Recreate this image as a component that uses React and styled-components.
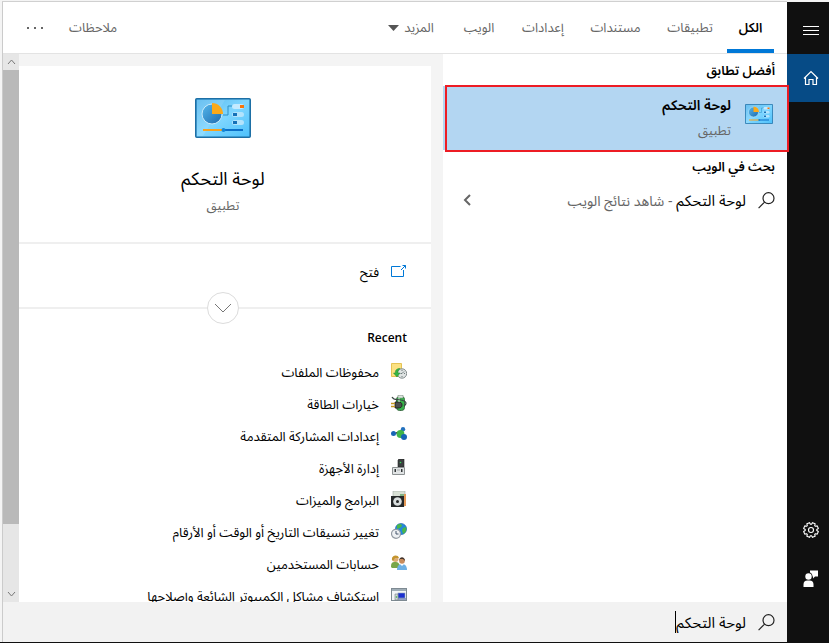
import React from "react";
import styled, { createGlobalStyle } from "styled-components";

const Global = createGlobalStyle`
  *, *::before, *::after { box-sizing: border-box; }
  html, body { margin: 0; padding: 0; }
  body {
    font-family: "Segoe UI", "Noto Sans Arabic", "DejaVu Sans", sans-serif;
    font-size: 13px;
    line-height: 20px;
    color: #000;
    background: #f4f4f4;
  }
  button, input { font: inherit; color: inherit; }
  button { border: 0; background: none; padding: 0; cursor: pointer; }
  h1, h2, p, ul { margin: 0; padding: 0; }
  ul { list-style: none; }
  svg { display: block; flex: none; }
`;

const Screen = styled.div`
  display: flex;
  height: 100vh;
  overflow: hidden;
  padding-top: 2px;
  padding-left: 2px;
  border-bottom: 1px solid #101010;
  background: #f4f4f4;
`;

const Rail = styled.nav`
  display: flex;
  flex-direction: column;
  flex: none;
  width: 42px;
  padding-bottom: 40px;
  background: #101010;
  color: #fff;
`;

const RailButton = styled.button`
  display: flex;
  align-items: center;
  justify-content: center;
  padding-left: 6px;
  padding-top: ${(p) => (p.$tall ? 4 : 0)}px;
  height: ${(p) => (p.$tall ? 52 : 48)}px;
  margin-top: ${(p) => (p.$push ? "auto" : 0)};
  background: ${(p) => (p.$active ? "#064b86" : "transparent")};
`;

const Main = styled.main`
  position: relative;
  z-index: 1;
  display: flex;
  flex-direction: column;
  flex: 1;
  min-width: 0;
  border-left: 1px solid #cbcbcb;
  box-shadow: 0 -1px 0 #d0d0d0;
  background: #fff;
`;

const Header = styled.header`
  display: flex;
  flex: none;
  height: 52px;
  padding: 0 13px 0 16px;
  border-bottom: 1px solid #e3e3e3;
`;

const Tab = styled.button`
  display: flex;
  align-items: center;
  justify-content: center;
  gap: 5px;
  width: ${(p) => p.$width}px;
  padding-top: 4px;
  border-bottom: 4px solid ${(p) => (p.$active ? "#0078d7" : "transparent")};
  font-weight: ${(p) => (p.$active ? 600 : 400)};
  color: ${(p) => (p.$active ? "#000" : "#666")};
  white-space: nowrap;
`;

const HeaderEnd = styled.div`
  display: flex;
  align-items: center;
  gap: 18px;
  margin-inline-start: auto;
  color: #666;
`;

const IconButton = styled.button`
  display: flex;
  align-items: center;
  justify-content: center;
  width: 32px;
  height: 32px;
  color: #666;
`;

const Body = styled.div`
  display: flex;
  flex: 1;
  min-height: 0;
`;

const Results = styled.section`
  flex: 344;
  min-width: 0;
`;

const GroupTitle = styled.h2`
  display: flex;
  align-items: center;
  height: 32px;
  padding: 2px 12px 0;
  font-size: 13px;
  font-weight: 600;
`;

const BestMatch = styled.button`
  position: relative;
  display: flex;
  align-items: flex-start;
  gap: 14px;
  width: 100%;
  height: 64px;
  padding: 10px 14px 0;
  background: #b3d6f2;
  text-align: start;
  & > svg { margin-top: 8px; }
  &::after {
    content: "";
    position: absolute;
    inset: -1px -2px -2px 2px;
    border: 2px solid #ed1c24;
  }
`;

const MatchText = styled.span`
  display: flex;
  flex-direction: column;
  gap: 5px;
`;

const MatchName = styled.strong`
  font-size: 14px;
  font-weight: 600;
`;

const Muted = styled.span`
  font-size: ${(p) => (p.$large ? 14 : 13)}px;
  color: #666;
`;

const WebResult = styled.button`
  display: flex;
  align-items: center;
  gap: 12px;
  width: 100%;
  height: 36px;
  padding: 0 12px 0 20px;
`;

const WebText = styled.span`
  flex: 1;
  padding-top: 2px;
  font-size: 15px;
  text-align: start;
  white-space: nowrap;
`;

const Detail = styled.section`
  display: flex;
  flex: 440;
  min-width: 0;
  background: #f4f4f4;
`;

const Card = styled.div`
  flex: 1;
  min-width: 0;
  margin: 12px 12px 0 0;
  overflow: hidden;
  background: #fff;
`;

const Hero = styled.div`
  display: flex;
  flex-direction: column;
  align-items: center;
  height: 178px;
  padding: 32px 4px 0 0;
  border-bottom: 2px solid #efefef;
`;

const HeroTitle = styled.h1`
  margin: 26px 0 2px;
  font-size: 18px;
  font-weight: 400;
  line-height: 30px;
`;

const Actions = styled.div`
  position: relative;
  height: 65px;
  padding: 12px 24px;
  border-bottom: 2px solid #efefef;
`;

const Row = styled.button`
  display: flex;
  align-items: center;
  gap: 12px;
  width: 100%;
  height: 32px;
  padding-top: 2px;
  text-align: start;
  white-space: nowrap;
  & > svg { margin-bottom: 4px; }
`;

const Expander = styled.button`
  position: absolute;
  bottom: -17px;
  left: calc(50% - 18px);
  display: flex;
  align-items: center;
  justify-content: center;
  width: 32px;
  height: 32px;
  border: 1px solid #dcdcdc;
  border-radius: 50%;
  background: #fff;
`;

const Recent = styled.div`
  padding: 18px 24px 0;
`;

const RecentTitle = styled.h2`
  margin-bottom: 7px;
  font-family: "Open Sans", "Noto Sans", sans-serif;
  font-size: 12px;
  font-weight: 600;
  line-height: 22px;
`;

const ScrollTrack = styled.div`
  display: flex;
  flex-direction: column;
  flex: none;
  width: 16px;
  background: #e6e6e6;
`;

const ScrollArrow = styled.button`
  display: flex;
  align-items: center;
  justify-content: center;
  flex: none;
  height: 16px;
`;

const ScrollLane = styled.div`
  flex: 1;
`;

const ScrollThumb = styled.div`
  height: 88%;
  background: #b9b9b9;
`;

const SearchBar = styled.label`
  display: flex;
  align-items: center;
  gap: 12px;
  flex: none;
  height: 40px;
  padding: 0 12px;
  background: #f2f2f2;
`;

const SearchInput = styled.input`
  field-sizing: content;
  height: 22px;
  padding: 2px 0 0;
  border: 0;
  border-left: 1px solid #000;
  border-radius: 0;
  outline: 0;
  background: transparent;
  font-size: 15px;
`;

const ControlPanelIcon = ({ width, height }) => (
  <svg width={width} height={height} viewBox="0 0 56 40" aria-hidden="true">
    <defs>
      <linearGradient id={"panel" + width} x1="0" y1="0" x2="1" y2="1">
        <stop offset="0" stopColor="#54b6ee" />
        <stop offset="0.5" stopColor="#7fd6ff" />
        <stop offset="1" stopColor="#4cc0fb" />
      </linearGradient>
      <linearGradient id={"pie" + width} x1="0" y1="0" x2="1" y2="1">
        <stop offset="0" stopColor="#56b8ec" />
        <stop offset="1" stopColor="#1c6aaf" />
      </linearGradient>
    </defs>
    <rect x="0.8" y="0.8" width="54.4" height="38.4" rx="1" fill={"url(#panel" + width + ")"} stroke="#1d6fa5" strokeWidth="1.6" />
    <path d="M2 2h28L8 38H2z" fill="#fff" opacity="0.12" />
    <circle cx="17" cy="16" r="10" fill={"url(#pie" + width + ")"} stroke="#c9eafa" />
    <path d="M17 16V5a11 11 0 0 1 11 11z" fill="#fba919" />
    <path d="M28 17h5V8h5" fill="none" stroke="#2d8fc6" />
    <rect x="37" y="6" width="12" height="5" rx="2.5" fill="#c3eaff" />
    <rect x="45" y="7" width="4" height="3" fill="#f7750b" />
    <rect x="37" y="14" width="12" height="5" rx="2.5" fill="#b3e3fc" />
    <rect x="38" y="15" width="4" height="3" fill="#1671b8" />
    <rect x="37" y="22" width="12" height="5" rx="2.5" fill="#b3e3fc" />
    <rect x="38" y="23" width="4" height="3" fill="#1671b8" />
    <path d="M8 32h20" stroke="#f9a11b" strokeWidth="2" />
    <path d="M28 32h20" stroke="#0b6fc8" strokeWidth="2" />
    <circle cx="28.500" cy="32" r="2" fill="#1287d8" />
  </svg>
);

const SearchIcon = () => (
  <svg width="17" height="17" viewBox="0 0 17 17" fill="none" stroke="#222" strokeWidth="1.2" aria-hidden="true">
    <circle cx="10.500" cy="6.200" r="5.500" />
    <path d="M6.600 10.100L0.600 16.200" />
  </svg>
);

const Chevron = ({ width, height, d, color, stroke = 1 }) => (
  <svg width={width} height={height} viewBox={`0 0 ${width} ${height}`} fill="none" stroke={color} strokeWidth={stroke} aria-hidden="true">
    <path d={d} />
  </svg>
);

const gearPath = (() => {
  const pts = [];
  for (let i = 0; i < 8; i++) {
    [[-17, 5.8], [-11, 7.5], [11, 7.5], [17, 5.8]].forEach(([o, r]) => {
      const a = ((i * 45 + 22.5 + o) * Math.PI) / 180;
      pts.push(`${(8 + r * Math.cos(a)).toFixed(2)} ${(8 + r * Math.sin(a)).toFixed(2)}`);
    });
  }
  return `M${pts.join("L")}Z`;
})();

const Small = ({ children }) => (
  <svg width="16" height="16" viewBox="0 0 16 16" aria-hidden="true">{children}</svg>
);

const OpenIcon = () => (
  <Small>
    <path d="M9.500 3.500H0.500v10h12V7" fill="none" stroke="#0078d7" />
    <path d="M10 7L14.500 2.500M11.500 2.500h3V5.500" fill="none" stroke="#0078d7" />
  </Small>
);

const recentItems = [
  {
    label: "محفوظات الملفات",
    icon: (
      <Small>
        <path d="M0.500 0.500h10v13h-10z" fill="#fbe182" stroke="#e5c354" />
        <circle cx="11" cy="10.500" r="4.700" fill="#dfe3e3" stroke="#838b8c" />
        <path d="M11 10.500l2-2M11 10.500H9.500M11 7v1M14 10.500h-1M11 14v-1" stroke="#566" strokeWidth="0.800" />
        <path d="M9 5.500C5 5.500 4 8 4.500 10H2.500l3.500 4 3-4H7C6.500 8 7.500 7 9 5.500z" fill="#35b444" stroke="#1a8a2c" strokeWidth="0.500" />
      </Small>
    ),
  },
  {
    label: "خيارات الطاقة",
    icon: (
      <Small>
        <rect x="5.500" y="1.500" width="8" height="14" rx="3" fill="#37b34a" stroke="#3c6b45" />
        <rect x="7" y="0.500" width="5" height="2.500" fill="#dce8df" stroke="#7b877e" strokeWidth="0.500" />
        <path d="M8 3.500v4" stroke="#c9f8cd" strokeWidth="2" />
        <path d="M1 2c2 4 5 2 9 3 6 1 6 4 3 6" fill="none" stroke="#3a4743" strokeWidth="1.200" />
        <path d="M4 7h3c3 0 4 1 4 3s-1 3-4 3H4z" fill="#4b504d" stroke="#161b18" strokeWidth="0.800" />
        <path d="M0 8.500h4M0 11.500h4" stroke="#c69a20" strokeWidth="1.500" />
      </Small>
    ),
  },
  {
    label: "إعدادات المشاركة المتقدمة",
    icon: (
      <Small>
        <path d="M2.500 6.500l7 1 3-5M9.500 7.500l4 3" stroke="#9fc6d6" />
        <circle cx="2.500" cy="6.500" r="2.500" fill="#1765b5" />
        <circle cx="12" cy="2.200" r="2.200" fill="#2371be" />
        <circle cx="9.500" cy="7" r="3.900" fill="#3fb549" />
        <circle cx="13" cy="10" r="3" fill="#1765b5" />
      </Small>
    ),
  },
  {
    label: "إدارة الأجهزة",
    icon: (
      <Small>
        <path d="M7 1l1-1h5v8H7z" fill="#3c4041" stroke="#222" strokeWidth="0.600" />
        <circle cx="9.500" cy="3.500" r="0.800" fill="#38d65a" />
        <path d="M1.500 8.500h12v7h-12z" fill="#e1e4e5" stroke="#8c9192" />
        <path d="M3.500 10h1.500v3H3.500zM10 10h1.500v3h-1.500z" fill="#313536" />
        <path d="M6 11h3" stroke="#a4a8a9" />
      </Small>
    ),
  },
  {
    label: "البرامج والميزات",
    icon: (
      <Small>
        <path d="M2 0h12v15H2z" fill="#d8e0d5" stroke="#a2aaa4" strokeWidth="0.600" />
        <path d="M11 3h4v12h-4z" fill="#e59a57" />
        <path d="M9 3h4v3H9z" fill="#7fb283" />
        <rect x="0" y="5" width="13" height="11" fill="#252829" />
        <circle cx="6.500" cy="10.500" r="4.300" fill="#d8dddd" />
        <circle cx="6.500" cy="10.500" r="1.500" fill="#252829" />
      </Small>
    ),
  },
  {
    label: "تغيير تنسيقات التاريخ أو الوقت أو الأرقام",
    icon: (
      <Small>
        <circle cx="10" cy="6" r="5.600" fill="#2387dc" stroke="#1b5ea6" strokeWidth="0.600" />
        <path d="M6 2c3-2 5-1 5 1L9 5 6 6zM12 5l3-1c1 4-1 6-3 7l-1-4z" fill="#49b749" />
        <circle cx="5" cy="10.800" r="4.500" fill="#eef1f4" stroke="#929aa3" strokeWidth="1.200" />
        <path d="M5 8v3h2.500" fill="none" stroke="#44546b" />
      </Small>
    ),
  },
  {
    label: "حسابات المستخدمين",
    icon: (
      <Small>
        <path d="M0 12c0-4 1-5 4-5s5 1 5 6H1z" fill="#78a64a" />
        <circle cx="4.500" cy="4" r="3" fill="#dcae75" />
        <path d="M1 5c-1-5 6-6 7-2L4 3 2 6z" fill="#c4952f" />
        <path d="M6 15c0-4 2-6 5-6s5 2 5 6z" fill="#6db0e4" />
        <path d="M9 9l2 2 2-2" fill="#fff" />
        <circle cx="11" cy="6" r="2.800" fill="#c88b5b" />
        <path d="M8 6c0-5 6-5 6 0l-2-2H9z" fill="#44342b" />
      </Small>
    ),
  },
  {
    label: "استكشاف مشاكل الكمبيوتر الشائعة وإصلاحها",
    icon: (
      <Small>
        <rect x="0.500" y="1.500" width="15" height="12" fill="#f2f5f7" stroke="#7e8a92" />
        <path d="M1 3h14" stroke="#9fadb6" strokeWidth="2" />
        <rect x="7" y="6" width="7" height="5" fill="#1b2fd0" stroke="#8ea4ba" strokeWidth="0.600" />
        <path d="M7 12h8" stroke="#364d96" />
        <path d="M4 7h3v6H4z" fill="#d0d6d8" stroke="#6f7d83" strokeWidth="0.600" />
        <circle cx="5.500" cy="10" r="0.800" fill="#31af43" />
      </Small>
    ),
  },
];

const tabs = [
  { label: "الكل", width: 47, active: true },
  { label: "تطبيقات", width: 74 },
  { label: "مستندات", width: 75 },
  { label: "إعدادات", width: 70 },
  { label: "الويب", width: 58 },
  { label: "المزيد", width: 78, more: true },
];

export default function App() {
  return (
    <Screen dir="rtl" lang="ar">
      <Global />
      <Rail aria-label="القائمة">
        <RailButton $tall aria-label="القائمة">
          <svg width="16" height="13" viewBox="0 0 16 13" stroke="#fff" aria-hidden="true">
            <path d="M0 2.500h16M0 6.500h16M0 10.500h16" />
          </svg>
        </RailButton>
        <RailButton $active aria-label="الصفحة الرئيسية">
          <svg width="16" height="16" viewBox="0 0 16 16" fill="none" stroke="#fff" strokeWidth="1.2" aria-hidden="true">
            <path d="M1 8.500L8 1.500l7 7M2.500 7.500v7h3.500V9.500h4v5h3.500v-7" />
          </svg>
        </RailButton>
        <RailButton $push aria-label="الإعدادات">
          <svg width="18" height="18" viewBox="-1 -1 18 18" fill="none" stroke="#fff" strokeWidth="1.1" strokeLinejoin="round" aria-hidden="true">
            <path d={gearPath} />
            <circle cx="8" cy="8" r="2.500" />
          </svg>
        </RailButton>
        <RailButton aria-label="ملاحظات">
          <svg width="16" height="17" viewBox="0 0 16 17" fill="#fff" aria-hidden="true">
            <circle cx="5.500" cy="6.500" r="3.200" />
            <path d="M0.500 17v-2.500a4 4 0 0 1 4-4h2a4 4 0 0 1 4 4V17zM7 0.500h8v6h-3L10 8.500V6.500H9.500C9.500 4.500 8.500 3 7 2.500z" />
          </svg>
        </RailButton>
      </Rail>
      <Main>
        <Header>
          {tabs.map((t) => (
            <Tab key={t.label} $width={t.width} $active={t.active}>
              {t.label}
              {t.more && (
                <svg width="11" height="6" viewBox="0 0 11 6" fill="#555" aria-hidden="true">
                  <path d="M0 0h11L5.500 6z" />
                </svg>
              )}
            </Tab>
          ))}
          <HeaderEnd>
            <button>ملاحظات</button>
            <IconButton aria-label="خيارات">
              <svg width="16" height="2" viewBox="0 0 16 2" fill="#666" aria-hidden="true">
                <path d="M0 0h2v2H0zM7 0h2v2H7zM14 0h2v2h-2z" />
              </svg>
            </IconButton>
          </HeaderEnd>
        </Header>
        <Body>
          <Results>
            <GroupTitle>أفضل تطابق</GroupTitle>
            <BestMatch>
              <ControlPanelIcon width={28} height={20} />
              <MatchText>
                <MatchName>لوحة التحكم</MatchName>
                <Muted>تطبيق</Muted>
              </MatchText>
            </BestMatch>
            <GroupTitle>بحث في الويب</GroupTitle>
            <WebResult>
              <SearchIcon />
              <WebText>
                لوحة التحكم <Muted $large>- شاهد نتائج الويب</Muted>
              </WebText>
              <Chevron width={8} height={12} d="M7 1L2 6l5 5" color="#666" stroke={2} />
            </WebResult>
          </Results>
          <Detail>
            <Card>
              <Hero>
                <ControlPanelIcon width={56} height={40} />
                <HeroTitle>لوحة التحكم</HeroTitle>
                <Muted>تطبيق</Muted>
              </Hero>
              <Actions>
                <Row>
                  <OpenIcon />
                  فتح
                </Row>
                <Expander aria-label="توسيع">
                  <Chevron width={18} height={10} d="M1 1l8 8 8-8" color="#777" />
                </Expander>
              </Actions>
              <Recent>
                <RecentTitle>Recent</RecentTitle>
                <ul>
                  {recentItems.map((item) => (
                    <li key={item.label}>
                      <Row>
                        {item.icon}
                        {item.label}
                      </Row>
                    </li>
                  ))}
                </ul>
              </Recent>
            </Card>
            <ScrollTrack>
              <ScrollArrow aria-label="تمرير لأعلى">
                <Chevron width={9} height={6} d="M1 5l3.500-4L8 5" color="#777" />
              </ScrollArrow>
              <ScrollLane>
                <ScrollThumb />
              </ScrollLane>
              <ScrollArrow aria-label="تمرير لأسفل">
                <Chevron width={9} height={6} d="M1 1l3.500 4L8 1" color="#777" />
              </ScrollArrow>
            </ScrollTrack>
          </Detail>
        </Body>
        <SearchBar>
          <SearchIcon />
          <SearchInput type="text" aria-label="بحث" defaultValue="لوحة التحكم" />
        </SearchBar>
      </Main>
    </Screen>
  );
}
